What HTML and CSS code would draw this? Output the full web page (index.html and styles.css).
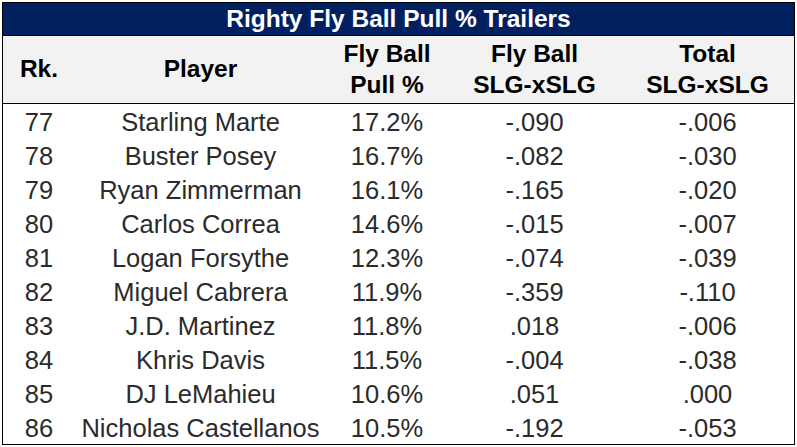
FILE: index.html
```html
<!DOCTYPE html>
<html>
<head>
<meta charset="utf-8">
<link rel="stylesheet" href="styles.css">
</head>
<body>
<div class="sheet">
  <div class="title">Righty Fly Ball Pull % Trailers</div>
  <div class="row head">
    <div class="cell">Rk.</div>
    <div class="cell">Player</div>
    <div class="cell two">Fly Ball<br>Pull %</div>
    <div class="cell two">Fly Ball<br>SLG-xSLG</div>
    <div class="cell two">Total<br>SLG-xSLG</div>
  </div>
  <div class="body">
    <div class="row"><div class="cell">77</div><div class="cell">Starling Marte</div><div class="cell">17.2%</div><div class="cell">-.090</div><div class="cell">-.006</div></div>
    <div class="row"><div class="cell">78</div><div class="cell">Buster Posey</div><div class="cell">16.7%</div><div class="cell">-.082</div><div class="cell">-.030</div></div>
    <div class="row"><div class="cell">79</div><div class="cell">Ryan Zimmerman</div><div class="cell">16.1%</div><div class="cell">-.165</div><div class="cell">-.020</div></div>
    <div class="row"><div class="cell">80</div><div class="cell">Carlos Correa</div><div class="cell">14.6%</div><div class="cell">-.015</div><div class="cell">-.007</div></div>
    <div class="row"><div class="cell">81</div><div class="cell">Logan Forsythe</div><div class="cell">12.3%</div><div class="cell">-.074</div><div class="cell">-.039</div></div>
    <div class="row"><div class="cell">82</div><div class="cell">Miguel Cabrera</div><div class="cell">11.9%</div><div class="cell">-.359</div><div class="cell">-.110</div></div>
    <div class="row"><div class="cell">83</div><div class="cell">J.D. Martinez</div><div class="cell">11.8%</div><div class="cell">.018</div><div class="cell">-.006</div></div>
    <div class="row"><div class="cell">84</div><div class="cell">Khris Davis</div><div class="cell">11.5%</div><div class="cell">-.004</div><div class="cell">-.038</div></div>
    <div class="row"><div class="cell">85</div><div class="cell">DJ LeMahieu</div><div class="cell">10.6%</div><div class="cell">.051</div><div class="cell">.000</div></div>
    <div class="row"><div class="cell">86</div><div class="cell">Nicholas Castellanos</div><div class="cell">10.5%</div><div class="cell">-.192</div><div class="cell">-.053</div></div>
  </div>
</div>
</body>
</html>
```

FILE: styles.css
```css
html, body {
  margin: 0;
  padding: 0;
  background: #ffffff;
}
body {
  padding: 2px;
  font-family: "Liberation Sans", Arial, sans-serif;
}
.sheet {
  width: 791px;
  border: 1px solid #000000;
  background: #ffffff;
}
.title {
  height: 32px;
  line-height: 32px;
  background: #002060;
  color: #ffffff;
  font-weight: bold;
  font-size: 24.5px;
  text-align: center;
  border-bottom: 1px solid #000000;
}
.row {
  display: grid;
  grid-template-columns: 72px 251px 122px 173px 173px;
}
.head {
  height: 67px;
  background: #f2f2f2;
  border-bottom: 1px solid #000000;
  color: #000000;
  font-weight: bold;
  font-size: 24.5px;
}
.head .cell {
  display: flex;
  align-items: center;
  justify-content: center;
  text-align: center;
  line-height: 31px;
  padding-bottom: 2px;
}
.body .row {
  height: 34px;
  color: #2b2b2b;
  font-size: 25.5px;
}
.body .cell {
  text-align: center;
  line-height: 34px;
  padding-top: 1px;
  white-space: nowrap;
}
```
